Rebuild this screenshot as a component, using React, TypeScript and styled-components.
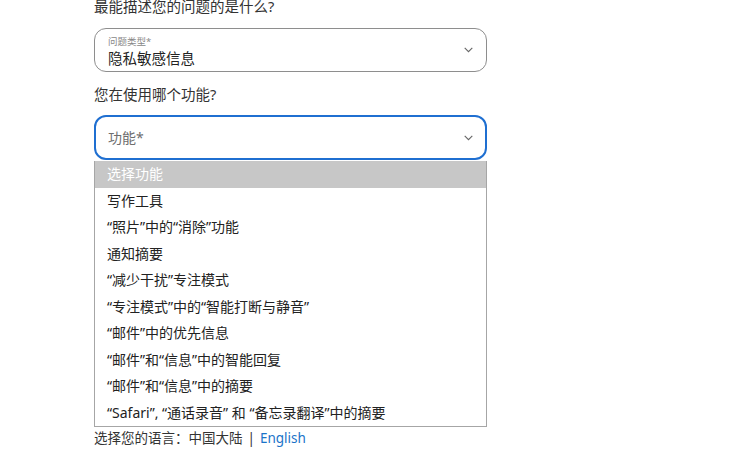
import React from "react";
import styled, { createGlobalStyle } from "styled-components";

const Global = createGlobalStyle`
  html, body { margin: 0; padding: 0; background: #fff; overflow: hidden; }
  body { font-family: "Noto Sans", "Noto Sans CJK SC", sans-serif; color: #333; }
`;

const Page = styled.div`
  width: 750px;
  height: 449px;
  overflow: hidden;
  padding-left: 94px;
  box-sizing: border-box;
`;

const Form = styled.div`
  width: 393px;
  margin-top: -5px;
  display: flex;
  flex-direction: column;
`;

const Question = styled.div<{ $mt?: number }>`
  font-size: 14.5px;
  line-height: 22px;
  color: #333;
  margin-top: ${(p) => p.$mt ?? 0}px;
`;

const SelectBox = styled.div<{ $focused?: boolean; $mt?: number }>`
  position: relative;
  box-sizing: border-box;
  height: ${(p) => (p.$focused ? 45 : 44)}px;
  margin-top: ${(p) => p.$mt ?? 0}px;
  border: ${(p) => (p.$focused ? "2px solid #1f6fd1" : "1px solid #8e8e8e")};
  border-radius: 12px;
  padding: 0 ${(p) => (p.$focused ? 12 : 13)}px;
  display: flex;
  flex-direction: column;
  justify-content: center;
  background: #fff;
`;

const FilledBox = styled(SelectBox)`
  justify-content: flex-start;
  padding-top: 7px;
`;

const SmallLabel = styled.div`
  font-size: 9.5px;
  line-height: 11px;
  height: 11px;
  color: #888;
`;

const Value = styled.div`
  font-size: 14.5px;
  line-height: 17px;
  margin-top: 3px;
  color: #222;
`;

const Placeholder = styled.div`
  font-size: 14px;
  line-height: 18px;
  color: #6e6e6e;
`;

const Chevron = styled.svg<{ $focused?: boolean }>`
  position: absolute;
  right: ${(p) => (p.$focused ? 12 : 13)}px;
  top: 50%;
  margin-top: -3px;
  width: 9px;
  height: 6px;
`;

const List = styled.div`
  box-sizing: border-box;
  margin-top: 1px;
  border: 1px solid #a6a6a6;
  border-top: none;
  background: #fff;
  display: flex;
  flex-direction: column;
`;

const Option = styled.div<{ $active?: boolean }>`
  height: 26.5px;
  line-height: 26.5px;
  padding-left: 12px;
  font-size: 14px;
  color: ${(p) => (p.$active ? "#fff" : "#222")};
  background: ${(p) => (p.$active ? "#c7c7c7" : "#fff")};
  white-space: nowrap;
`;

const LangLine = styled.div`
  font-size: 13.5px;
  line-height: 20px;
  color: #333;
  margin-top: 1px;
`;

const Link = styled.a`
  color: #1a73c8;
  text-decoration: none;
`;

const Sep = styled.span`
  margin: 0 5px;
`;

const ChevronIcon = ({ focused }: { focused?: boolean }) => (
  <Chevron $focused={focused} viewBox="0 0 9 6">
    <path d="M0.7 0.8l3.8 3.8 3.8-3.8" fill="none" stroke="#666" strokeWidth="1.1" />
  </Chevron>
);

const options = [
  "选择功能",
  "写作工具",
  "“照片”中的“消除”功能",
  "通知摘要",
  "“减少干扰”专注模式",
  "“专注模式”中的“智能打断与静音”",
  "“邮件”中的优先信息",
  "“邮件”和“信息”中的智能回复",
  "“邮件”和“信息”中的摘要",
  "“Safari”, “通话录音” 和 “备忘录翻译”中的摘要",
];

export default function App() {
  return (
    <>
      <Global />
      <Page>
        <Form>
          <Question>最能描述您的问题的是什么?</Question>
          <FilledBox $mt={11}>
            <SmallLabel>问题类型*</SmallLabel>
            <Value>隐私敏感信息</Value>
            <ChevronIcon />
          </FilledBox>
          <Question $mt={11}>您在使用哪个功能?</Question>
          <SelectBox $focused $mt={10}>
            <Placeholder>功能*</Placeholder>
            <ChevronIcon focused />
          </SelectBox>
          <List>
            {options.map((o, i) => (
              <Option key={i} $active={i === 0}>
                {o}
              </Option>
            ))}
          </List>
          <LangLine>
            选择您的语言：中国大陆<Sep>|</Sep>
            <Link href="#">English</Link>
          </LangLine>
        </Form>
      </Page>
    </>
  );
}
